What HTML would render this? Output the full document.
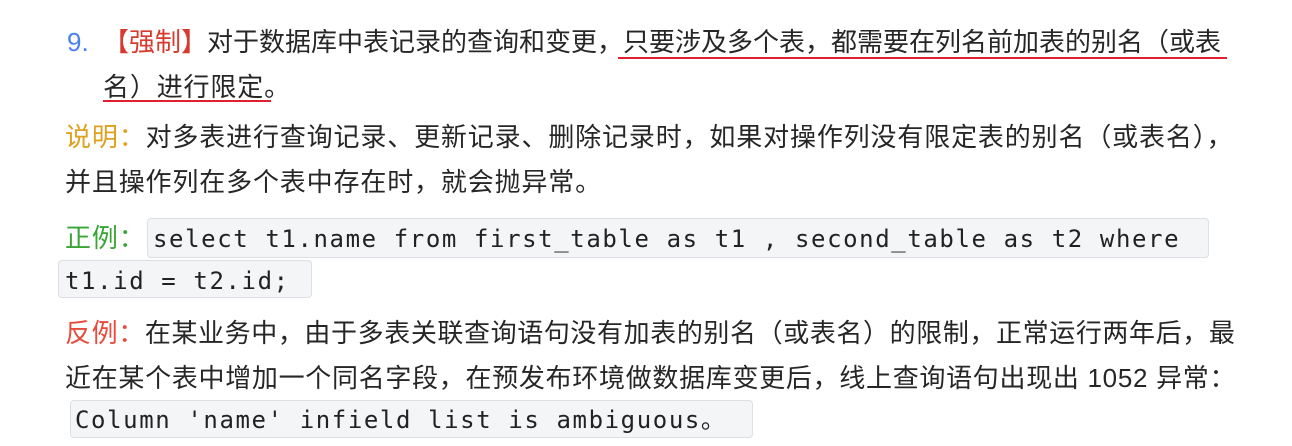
<!DOCTYPE html>
<html><head><meta charset="utf-8"><style>
body{margin:0;width:1292px;height:446px;background:#fff;position:relative;overflow:hidden;font-family:"Liberation Sans","Noto Sans CJK SC",sans-serif;color:#262626;}
.l{position:absolute;white-space:nowrap;font-size:26px;line-height:30px;letter-spacing:0.85px;}
.c{position:absolute;background:#f4f5f7;border:1px solid #dcdfe4;border-radius:4px;box-sizing:border-box;}
.m{position:absolute;white-space:nowrap;font-family:"DejaVu Sans Mono","Liberation Mono",monospace;font-size:24px;letter-spacing:1.6px;line-height:30px;color:#222;}
.u{position:absolute;height:2px;background:#e0202f;}
</style></head><body>
<div class="l" style="left:67px;top:27px;color:#4a80f0;letter-spacing:0">9.</div>
<div class="l" style="left:103px;top:27px;letter-spacing:0"><span style="color:#d83a2e">【强制】</span>对于数据库中表记录的查询和变更，只要涉及多个表，都需要在列名前加表的别名（或表</div>
<div class="u" style="left:618px;top:57px;width:609px"></div>
<div class="l" style="left:103px;top:72px">名）进行限定。</div>
<div class="u" style="left:103px;top:100px;width:168px"></div>
<div class="l" style="left:65px;top:122px"><span style="color:#e0a020">说明：</span>对多表进行查询记录、更新记录、删除记录时，如果对操作列没有限定表的别名（或表名），</div>
<div class="l" style="left:65px;top:167px">并且操作列在多个表中存在时，就会抛异常。</div>
<div class="l" style="left:65px;top:223px;color:#3aa537">正例：</div>
<div class="c" style="left:147px;top:218px;width:1062px;height:40px"></div>
<div class="m" style="left:153px;top:224px">select t1.name from first_table as t1 , second_table as t2 where</div>
<div class="c" style="left:58px;top:260px;width:254px;height:38px"></div>
<div class="m" style="left:65px;top:266px">t1.id = t2.id;</div>
<div class="l" style="left:65px;top:318px;letter-spacing:0.6px"><span style="color:#e84a3c">反例：</span>在某业务中，由于多表关联查询语句没有加表的别名（或表名）的限制，正常运行两年后，最</div>
<div class="l" style="left:65px;top:363px;letter-spacing:0.7px">近在某个表中增加一个同名字段，在预发布环境做数据库变更后，线上查询语句出现出 1052 异常：</div>
<div class="c" style="left:70px;top:400px;width:683px;height:38px"></div>
<div class="m" style="left:75px;top:405px">Column 'name' infield list is ambiguous。</div>
</body></html>
